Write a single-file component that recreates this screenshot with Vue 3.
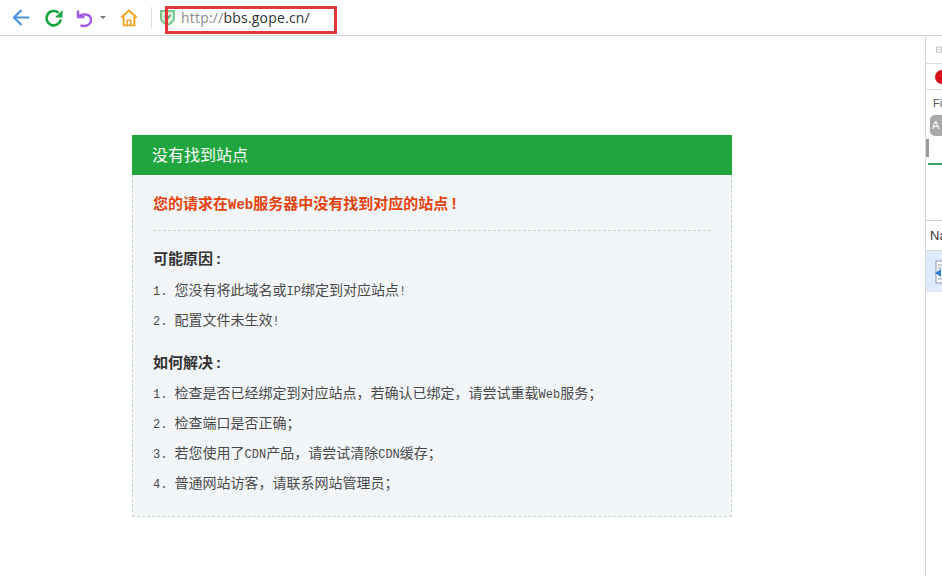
<script setup>
const causes = [
  ['1. ', '您没有将此域名或', 'IP', '绑定到对应站点', '!'],
  ['2. ', '配置文件未生效', '!'],
]
const fixes = [
  ['1. ', '检查是否已经绑定到对应站点\uFF0C若确认已绑定\uFF0C请尝试重载', 'Web', '服务\uFF1B'],
  ['2. ', '检查端口是否正确\uFF1B'],
  ['3. ', '若您使用了', 'CDN', '产品\uFF0C请尝试清除', 'CDN', '缓存\uFF1B'],
  ['4. ', '普通网站访客\uFF0C请联系网站管理员\uFF1B'],
]
const isLatin = (s) => /^[A-Za-z0-9.! ]+$/.test(s)
</script>

<template>
  <div class="page">
    <header class="toolbar">
      <svg class="ic back" width="20" height="20" viewBox="0 0 20 20"><path d="M17.500 9.500H2.500M9.500 2 2 9.500l7.500 7.500" fill="none" stroke="#4a94ec" stroke-width="2.200"/></svg>
      <svg class="ic reload" width="20" height="20" viewBox="0 0 20 20"><path d="M16.800 11.500A7.200 7.200 0 1 1 14.500 4.800" fill="none" stroke="#14a63e" stroke-width="2.600"/><path d="M18.500 2v7.500H11z" fill="#14a63e"/></svg>
      <svg class="ic undo" width="18" height="20" viewBox="0 0 18 20"><path d="M2 2.500v6.500h6.500M2.500 8.500C5 5.500 15 5 15 11.500S8 18.500 4.500 17.500" fill="none" stroke="#a05ce6" stroke-width="2.400"/></svg>
      <span class="caret"></span>
      <svg class="ic home" width="18" height="20" viewBox="0 0 20 20"><path d="M1.500 9.500 10 1.800l8.500 7.700M4 8v10.200h12V8" fill="none" stroke="#f5a623" stroke-width="2.200"/><path d="M8 18v-5.500h4V18" fill="none" stroke="#f5a623" stroke-width="1.600"/></svg>
      <span class="sep"></span>
      <svg class="ic shield" width="15" height="17" viewBox="0 0 15 17"><path d="M1 2h13v7c0 3.500-3 5.500-6.500 7C4 14.500 1 12.500 1 9z" fill="#d8f0dc" stroke="#74c68a" stroke-width="2"/><path d="m4.500 6.500 3 3 3-3.500" fill="none" stroke="#4aa463" stroke-width="1.600"/></svg>
      <div class="url"><span class="scheme">http://</span>bbs.gope.cn/</div>
      <span class="highlight"></span>
    </header>

    <div class="content">
      <main class="main">
        <section class="card">
          <h1 class="card-title">没有找到站点</h1>
          <div class="card-body">
            <p class="alert">您的请求在<span class="lat-b">Web</span>服务器中没有找到对应的站点<span class="lat-b bang">!</span></p>
            <hr class="rule" />
            <h2 class="heading first">可能原因<span class="colon">:</span></h2>
            <p v-for="(row, i) in causes" :key="i" class="item">
              <template v-for="(part, j) in row" :key="j">
                <span v-if="isLatin(part)" class="lat">{{ part }}</span>
                <template v-else>{{ part }}</template>
              </template>
            </p>
            <h2 class="heading second">如何解决<span class="colon">:</span></h2>
            <p v-for="(row, i) in fixes" :key="i" class="item">
              <template v-for="(part, j) in row" :key="j">
                <span v-if="isLatin(part)" class="lat">{{ part }}</span>
                <template v-else>{{ part }}</template>
              </template>
            </p>
          </div>
        </section>
      </main>

      <aside class="devtools">
        <div class="dv-row dv-icon">
          <svg width="13" height="13" viewBox="0 0 13 13"><path d="M1 1h11v11H1z" fill="none" stroke="#777"/><path d="M4 6.500h6" stroke="#777"/></svg>
        </div>
        <div class="dv-row dv-rec"><span class="rec"></span></div>
        <div class="dv-filter">
          <span class="dv-label">Fi</span>
          <span class="pill">A</span>
        </div>
        <div class="dv-graph"><span class="handle"></span><span class="trace"></span></div>
        <div class="dv-name">Na</div>
        <div class="dv-file">
          <svg width="12" height="26" viewBox="0 0 12 26"><path d="M2 2h10v22H2z" fill="#fff" stroke="#8a9bb0"/><path d="M4 6h8M4 9h8M4 20h8" stroke="#8a9bb0"/><path d="M1 14l6-4v8z" fill="#2f7fd0"/></svg>
        </div>
      </aside>
    </div>
  </div>
</template>

<style scoped>
.page {
  width: 942px;
  height: 576px;
  overflow: hidden;
  display: flex;
  flex-direction: column;
  background: #fff;
  font-family: "Noto Sans CJK SC", "Liberation Sans", sans-serif;
}
.toolbar {
  position: relative;
  height: 35px;
  flex: none;
  display: flex;
  align-items: center;
  padding-left: 12px;
  border-bottom: 1px solid #d6d6d6;
}
.ic { flex: none; }
.reload { margin-left: 12px; }
.undo { margin-left: 12px; }
.caret {
  margin-left: 6px;
  width: 0;
  height: 0;
  border: 3px solid transparent;
  border-top-color: #777;
  border-bottom: 0;
}
.home { margin-left: 14px; }
.sep {
  margin-left: 13px;
  width: 1px;
  height: 22px;
  background: #dcdcdc;
}
.shield { margin-left: 8px; }
.url {
  margin-left: 6px;
  font-family: "Open Sans", "Liberation Sans", sans-serif;
  font-size: 14px;
  color: #333;
  letter-spacing: 0.2px;
}
.scheme { color: #8a8a8a; }
.highlight {
  position: absolute;
  left: 165px;
  top: 6px;
  width: 172px;
  height: 28px;
  box-sizing: border-box;
  border: 3px solid #e5383b;
  pointer-events: none;
}
.content {
  flex: 1;
  min-height: 0;
  display: flex;
}
.main {
  flex: 1;
  padding: 99px 0 0 132px;
}
.card { width: 600px; }
.card-title {
  margin: 0;
  height: 40px;
  padding-left: 20px;
  background: #21a63f;
  color: #fff;
  font-size: 16px;
  font-weight: 400;
  line-height: 38px;
}
.card-body {
  height: 342px;
  box-sizing: border-box;
  padding: 0 20px;
  background: #f3f6f9;
  border: 1px dashed #c9d8c5;
  border-top: 0;
}
.alert {
  margin: 0;
  padding-top: 16px;
  height: 55px;
  box-sizing: border-box;
  color: #e8420f;
  font-size: 15px;
  font-weight: 700;
  line-height: 24px;
}
.lat-b {
  font-family: "Liberation Mono", monospace;
  font-size: 14px;
}
.bang { font-size: 16px; margin-left: 1px; }
.rule {
  margin: 0;
  border: 0;
  border-top: 1px dashed #c9d8c5;
}
.heading {
  margin: 0;
  height: 30px;
  color: #333;
  font-size: 15px;
  font-weight: 700;
  line-height: 30px;
}
.colon {
  font-family: "Liberation Mono", monospace;
  font-size: 15px;
  margin-left: 1px;
}
.heading.first { margin-top: 12px; height: 31px; }
.heading.second { margin-top: 13px; }
.item {
  margin: 0;
  height: 30px;
  color: #4a4a4a;
  font-size: 14px;
  line-height: 30px;
  white-space: pre;
}
.lat {
  font-family: "Liberation Mono", monospace;
  font-size: 12px;
}
.devtools {
  flex: none;
  width: 16px;
  border-left: 1px solid #d6d6d6;
  display: flex;
  flex-direction: column;
  overflow: hidden;
}
.dv-row {
  display: flex;
  align-items: center;
  padding-left: 9px;
  border-bottom: 1px solid #dcdcdc;
  flex: none;
}
.dv-icon { height: 27px; padding-left: 10px; }
.dv-rec { height: 25px; padding-left: 9px; }
.rec {
  flex: none;
  width: 14px;
  height: 14px;
  border-radius: 50%;
  background: #d9101a;
}
.dv-filter {
  height: 47px;
  flex: none;
  box-sizing: border-box;
  padding: 5px 0 0 7px;
  font-family: "Liberation Sans", sans-serif;
  font-size: 11px;
  color: #555;
  line-height: 16px;
}
.dv-label { display: block; }
.pill {
  display: block;
  margin: 4px 0 0 -3px;
  width: 12px;
  height: 21px;
  border-radius: 5px 0 0 5px;
  background: #a9a9a9;
  color: #fff;
  line-height: 21px;
  padding-left: 2px;
  box-sizing: border-box;
}
.dv-graph {
  position: relative;
  height: 83px;
  flex: none;
  border-bottom: 1px solid #cfcfcf;
}
.handle {
  position: absolute;
  left: 0;
  top: 2px;
  width: 3px;
  height: 18px;
  background: #9a9a9a;
}
.trace {
  position: absolute;
  left: 2px;
  right: 0;
  top: 26px;
  height: 2px;
  background: #3aa56a;
}
.dv-name {
  height: 30px;
  flex: none;
  box-sizing: border-box;
  padding-left: 4px;
  font-family: "Liberation Sans", sans-serif;
  font-size: 13px;
  line-height: 30px;
  color: #333;
  border-bottom: 1px solid #dcdcdc;
}
.dv-file {
  flex: none;
  height: 41px;
  box-sizing: border-box;
  padding: 8px 0 0 8px;
  background: #dfeafa;
}
</style>
